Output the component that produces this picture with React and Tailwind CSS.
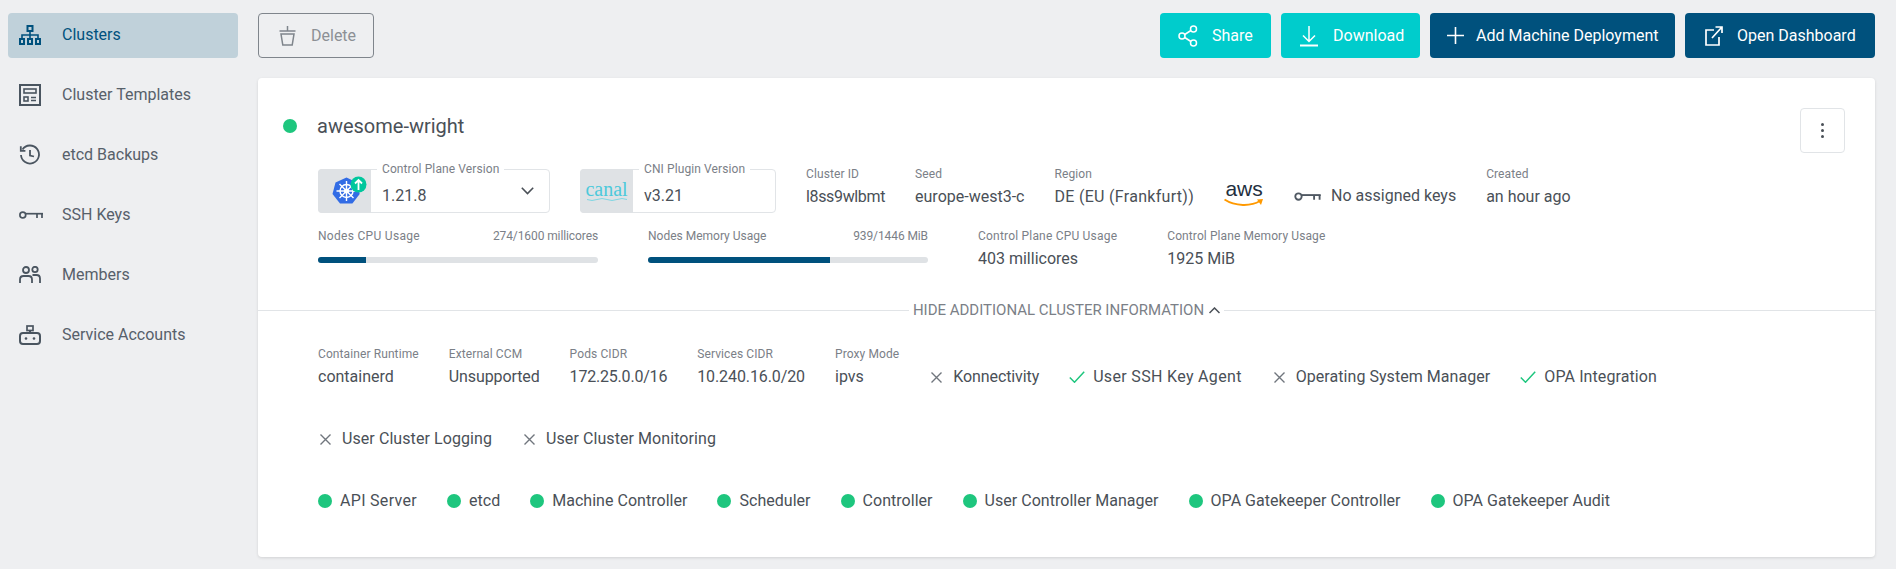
import React from "react";

const S = { fill: "none", stroke: "currentColor", strokeWidth: 1.7 };

const SitemapIcon = () => (
  <svg width="22" height="20" viewBox="0 0 22 20" {...S} strokeWidth="2">
    <rect x="8.5" y="1" width="5" height="5" />
    <rect x="1" y="14" width="4" height="5" />
    <rect x="9" y="14" width="4" height="5" />
    <rect x="17" y="14" width="4" height="5" />
    <path d="M11 6v8M3 14v-4h16v4" strokeWidth="1.6" />
  </svg>
);
const TemplateIcon = () => (
  <svg width="22" height="22" viewBox="0 0 22 22" {...S} strokeWidth="2">
    <rect x="1" y="1" width="20" height="20" />
    <rect x="5" y="5" width="12" height="4" strokeWidth="1.6" />
    <rect x="5" y="13" width="4" height="4" strokeWidth="1.6" />
    <path d="M12 13.5h5M12 16.5h5" strokeWidth="1.6" />
  </svg>
);
const HistoryIcon = () => (
  <svg width="22" height="22" viewBox="0 0 22 22" {...S} strokeWidth="1.8">
    <path d="M3.5 5.5A9 9 0 1 1 2 11" />
    <path d="M1.8 2.2v4.6h4.6" />
    <path d="M11 6v5.5l4 1" />
  </svg>
);
const KeyIcon = ({ w = 24, h = 10 }) => (
  <svg width={w} height={h} viewBox="0 0 24 10" {...S} strokeWidth="1.7">
    <circle cx="3.8" cy="5" r="2.9" />
    <path d="M6.7 3.7H24" />
    <path d="M18 3.7V8M23 3.7V8" />
  </svg>
);
const MembersIcon = () => (
  <svg width="22" height="18" viewBox="0 0 22 18" {...S} strokeWidth="1.8">
    <circle cx="7" cy="4" r="3" />
    <circle cx="16" cy="3.5" r="2.7" />
    <path d="M1 17v-3.5c0-2 1.500-3.500 3.500-3.500h5c2 0 3.500 1.500 3.500 3.500V17" />
    <path d="M13.500 9h4c2 0 3.500 1.500 3.500 3.500V17" />
  </svg>
);
const RobotIcon = () => (
  <svg width="22" height="20" viewBox="0 0 22 20" {...S} strokeWidth="2">
    <rect x="8" y="1" width="6" height="4.500" strokeWidth="1.700" />
    <path d="M11 5.500V8" />
    <rect x="1" y="8" width="20" height="11" rx="3" />
    <circle cx="7" cy="13.500" r="1.300" fill="currentColor" stroke="none" />
    <circle cx="15" cy="13.500" r="1.300" fill="currentColor" stroke="none" />
  </svg>
);
const TrashIcon = () => (
  <svg width="17" height="20" viewBox="0 0 17 20" {...S} strokeWidth="1.500">
    <path d="M0.500 5h16" />
    <path d="M8.500 0v5" />
    <path d="M2 8h13l-1.800 11H3.800z" />
  </svg>
);
const ShareIcon = () => (
  <svg width="20" height="22" viewBox="0 0 20 22" {...S} strokeWidth="1.500">
    <circle cx="15.500" cy="4" r="3" />
    <circle cx="4" cy="11" r="3" />
    <circle cx="15.500" cy="18" r="3" />
    <path d="M6.700 9.500l6.200-4M6.700 12.500l6.200 4" />
  </svg>
);
const DownloadIcon = () => (
  <svg width="18" height="22" viewBox="0 0 18 22" {...S} strokeWidth="1.500">
    <path d="M9 1v15M3 10.500l6 6 6-6" />
    <path d="M0 20.500h18" strokeWidth="2" />
  </svg>
);
const PlusIcon = () => (
  <svg width="17" height="17" viewBox="0 0 17 17" {...S} strokeWidth="1.600">
    <path d="M8.500 0v17M0 8.500h17" />
  </svg>
);
const ExternalIcon = () => (
  <svg width="18" height="20" viewBox="0 0 18 20" {...S} strokeWidth="1.700">
    <path d="M9 4H1v15h13v-8" />
    <path d="M7 12L16.500 1.500M10.500 1h6.500v6" />
  </svg>
);
const KubeIcon = () => (
  <svg width="36" height="30" viewBox="0 0 36 30" className="ml-[8px]">
    <path d="M15.500 1.500l10.500 5 2.700 11.500-7.300 9.500H9l-7.500-9.500L4.500 6.500z" fill="#326ce5" />
    <g fill="none" stroke="#fff" strokeWidth="1.400">
      <circle cx="15.500" cy="15" r="6.500" />
      <circle cx="15.500" cy="15" r="1.800" fill="#fff" />
      <path d="M15.500 5v20M5.500 15h20M8.500 8l14 14M22.500 8l-14 14" />
    </g>
    <circle cx="27.500" cy="8.500" r="8" fill="#00c79d" />
    <path d="M27.500 14V4M24 7.500l3.500-3.500 3.500 3.500" fill="none" stroke="#fff" strokeWidth="1.800" />
  </svg>
);
const CheckIcon = () => (
  <svg width="16" height="12" viewBox="0 0 16 12" fill="none" stroke="#1ec67e" strokeWidth="1.500">
    <path d="M0.800 6.500l4.700 4.700L15.200 0.800" />
  </svg>
);
const CrossIcon = () => (
  <svg width="11" height="11" viewBox="0 0 11 11" fill="none" stroke="#70767d" strokeWidth="1.400">
    <path d="M0.500 0.500l10 10M10.500 0.500l-10 10" />
  </svg>
);
const ChevronDown = () => (
  <svg width="13" height="8" viewBox="0 0 13 8" fill="none" stroke="#4a5057" strokeWidth="1.600">
    <path d="M0.800 0.800l5.700 5.700 5.700-5.700" />
  </svg>
);
const ChevronUp = () => (
  <svg width="11" height="7" viewBox="0 0 11 7" fill="none" stroke="#4a5057" strokeWidth="1.500">
    <path d="M0.500 6l5-5 5 5" />
  </svg>
);

const nav = [
  ["Clusters", <SitemapIcon />, true],
  ["Cluster Templates", <TemplateIcon />],
  ["etcd Backups", <HistoryIcon />],
  ["SSH Keys", <KeyIcon />],
  ["Members", <MembersIcon />],
  ["Service Accounts", <RobotIcon />],
];

function Info({ label, value, labelCls = "tracking-[0.1px]", valueCls = "" }) {
  return (
    <div className="flex flex-col whitespace-nowrap">
      <span className={`text-[12px] leading-[16px] text-[#7b8087] ${labelCls}`}>{label}</span>
      <span className={`mt-[5px] text-[16px] leading-[20px] text-[#4a5057] ${valueCls}`}>{value}</span>
    </div>
  );
}

function Usage({ label, right, pct, labelCls }) {
  return (
    <div className="w-[280px]">
      <div className="flex justify-between text-[12px] leading-[16px] text-[#7b8087]">
        <span className={labelCls}>{label}</span>
        <span className="tracking-[-0.1px]">{right}</span>
      </div>
      <div className="mt-[13px] h-[6px] overflow-hidden rounded-full bg-[#dfe2e5]">
        <div className="h-full bg-[#00517d]" style={{ width: `${pct}%` }} />
      </div>
    </div>
  );
}

function Field({ w, logo, label, value, chevron }) {
  return (
    <div className={`relative flex h-[44px] ${w} rounded-[4px] border border-[#e1e4e7]`}>
      <div className="-m-px flex h-[44px] w-[53px] shrink-0 items-center justify-center rounded-l-[4px] bg-[#dfe2e5]">
        {logo}
      </div>
      <div className="flex flex-1 items-end justify-between pb-[6px] pl-[12px] pr-[15px]">
        <span className="text-[16px] leading-[20px] text-[#4a5057]">{value}</span>
      </div>
      {chevron && (
        <span className="absolute right-[15px] top-[17px] flex">
          <ChevronDown />
        </span>
      )}
      <span className="absolute left-[58px] top-[-9px] whitespace-nowrap bg-white px-[5px] text-[12px] leading-[16px] tracking-[0.1px] text-[#7b8087]">
        {label}
      </span>
    </div>
  );
}

function Feature({ on, label, cls = "" }) {
  return (
    <div className={`flex items-center whitespace-nowrap text-[16px] leading-[20px] text-[#4a5057] ${cls}`}>
      {on ? (
        <span className="mr-[8px] flex"><CheckIcon /></span>
      ) : (
        <span className="ml-[2px] mr-[11px] flex"><CrossIcon /></span>
      )}
      {label}
    </div>
  );
}

function Health({ label, cls = "tracking-[0.03px]" }) {
  return (
    <div className={`flex items-center gap-[8px] whitespace-nowrap text-[16px] leading-[20px] text-[#4a5057] ${cls}`}>
      <span className="h-[14px] w-[14px] rounded-full bg-[#1ec67e]" />
      {label}
    </div>
  );
}

function Btn({ icon, label, dark, cls }) {
  return (
    <button className={`flex h-[45px] items-center rounded-[4px] text-[16px] text-white ${dark ? "bg-[#00517d]" : "bg-[#00cccc]"} ${cls}`}>
      {icon}
      <span>{label}</span>
    </button>
  );
}

export default function App() {
  return (
    <div className="flex min-h-[569px] bg-[#eeeff1] font-['Roboto',sans-serif]">
      <aside className="flex w-[258px] shrink-0 flex-col gap-[15px] pl-[8px] pr-[20px] pt-[13px]">
        {nav.map(([label, icon, active]) => (
          <div
            key={label}
            className={`flex h-[45px] items-center rounded-[4px] pb-[2px] text-[16px] ${active ? "bg-[#c0d1da] text-[#00517d]" : "text-[#57606a]"}`}
          >
            <span className={`flex w-[54px] justify-start pl-[11px] ${active ? "" : "text-[#4a5560]"}`}>{icon}</span>
            {label}
          </div>
        ))}
      </aside>
      <main className="w-[1617px] pt-[13px]">
        <div className="flex h-[45px] justify-between">
          <button className="flex w-[116px] items-center rounded-[4px] border border-[#7f858c] pl-[20px] text-[16px] text-[#8c9095]">
            <span className="mr-[15px] flex text-[#7f858c]"><TrashIcon /></span>
            Delete
          </button>
          <div className="flex gap-[10px]">
            <Btn icon={<span className="mr-[14px] flex"><ShareIcon /></span>} label="Share" cls="w-[111px] pl-[18px]" />
            <Btn icon={<span className="mr-[15px] flex"><DownloadIcon /></span>} label="Download" cls="w-[139px] pl-[19px]" />
            <Btn dark icon={<span className="mr-[12px] flex"><PlusIcon /></span>} label="Add Machine Deployment" cls="w-[245px] pl-[17px]" />
            <Btn dark icon={<span className="mr-[14px] flex"><ExternalIcon /></span>} label="Open Dashboard" cls="w-[190px] pl-[20px]" />
          </div>
        </div>

        <section className="mt-[20px] rounded-[4px] bg-white pb-[46px] pt-[30px] shadow-[0_1px_3px_rgba(0,0,0,0.12)]">
          <div className="flex h-[45px] items-start justify-between pl-[25px] pr-[30px]">
            <div className="flex h-[36px] items-center">
              <span className="h-[14px] w-[14px] rounded-full bg-[#1ec67e]" />
              <span className="ml-[20px] text-[20px] leading-[24px] text-[#4a5057]">awesome-wright</span>
            </div>
            <button className="flex h-[45px] w-[45px] flex-col items-center justify-center gap-[3px] rounded-[4px] border border-[#e1e4e7]">
              <span className="h-[3px] w-[3px] rounded-full bg-[#4a5057]" />
              <span className="h-[3px] w-[3px] rounded-full bg-[#4a5057]" />
              <span className="h-[3px] w-[3px] rounded-full bg-[#4a5057]" />
            </button>
          </div>

          <div className="mt-[16px] flex h-[44px] items-start gap-[30px] pl-[60px]">
            <Field w="w-[232px]" logo={<KubeIcon />} label="Control Plane Version" value="1.21.8" chevron />
            <Field w="w-[196px]" value="v3.21" label="CNI Plugin Version" logo={
              <div className="relative flex flex-col items-center">
                <span className="font-['Liberation_Serif',serif] text-[20px] leading-[18px] text-[#4cc9db]">canal</span>
                <svg width="40" height="4" viewBox="0 0 40 4" fill="none" stroke="#7fd6e3" strokeWidth="1">
                  <path d="M0 1.500q5 2 10 0t10 0 10 0 10 0" />
                </svg>
              </div>
            } />
            <div className="-mt-[3px]"><Info label="Cluster ID" value="l8ss9wlbmt" valueCls="tracking-[-0.35px]" /></div>
            <div className="-mt-[3px]"><Info label="Seed" value="europe-west3-c" /></div>
            <div className="-mt-[3px]"><Info label="Region" value="DE (EU (Frankfurt))" valueCls="tracking-[0.3px]" /></div>
            <div className="mt-[11px] flex w-[40px] flex-col items-center">
              <span className="font-['Liberation_Sans',sans-serif] text-[21px] leading-[18px] text-[#232f3e]">aws</span>
              <svg width="40" height="9" viewBox="0 0 40 9" fill="none">
                <path d="M0.500 1.500C11 8.500 27 8.500 36 3" stroke="#f90" strokeWidth="2" />
                <path d="M33 1.500l6-0.500-2 6z" fill="#f90" />
              </svg>
            </div>
            <div className="mt-[17px] flex h-[20px] items-center gap-[10px] whitespace-nowrap text-[16px] text-[#4a5057]">
              <span className="flex text-[#4f5862]"><KeyIcon w={27} h={11} /></span>
              No assigned keys
            </div>
            <div className="-mt-[3px]"><Info label="Created" value="an hour ago" /></div>
          </div>

          <div className="mt-[15px] flex h-[41px] items-start gap-[50px] pl-[60px]">
            <Usage label="Nodes CPU Usage" right="274/1600 millicores" pct={17.1} labelCls="tracking-[0.3px]" />
            <Usage label="Nodes Memory Usage" right="939/1446 MiB" pct={65} />
            <Info label="Control Plane CPU Usage" value="403 millicores" labelCls="tracking-[0.2px]" />
            <Info label="Control Plane Memory Usage" value="1925 MiB" />
          </div>

          <div className="mt-[31px] flex h-[20px] items-center">
            <span className="h-px flex-1 bg-[#e1e4e7]" />
            <span className="flex items-center gap-[5px] whitespace-nowrap px-[4px] text-[15px] text-[#7b8087]">
              HIDE ADDITIONAL CLUSTER INFORMATION <ChevronUp />
            </span>
            <span className="h-px flex-1 bg-[#e1e4e7]" />
          </div>

          <div className="mt-[26px] flex items-end gap-[30px] pl-[60px]">
            <Info label="Container Runtime" value="containerd" />
            <Info label="External CCM" value="Unsupported" valueCls="tracking-[-0.1px]" />
            <Info label="Pods CIDR" value="172.25.0.0/16" valueCls="tracking-[-0.2px]" />
            <Info label="Services CIDR" value="10.240.16.0/20" valueCls="tracking-[-0.1px]" />
            <Info label="Proxy Mode" value="ipvs" />
            <Feature label="Konnectivity" cls="tracking-[-0.1px]" />
            <Feature on label="User SSH Key Agent" cls="tracking-[0.33px]" />
            <Feature label="Operating System Manager" cls="tracking-[0.05px]" />
            <Feature on label="OPA Integration" cls="tracking-[0.1px]" />
          </div>
          <div className="mt-[42px] flex gap-[30px] pl-[60px]">
            <Feature label="User Cluster Logging" cls="tracking-[0.08px]" />
            <Feature label="User Cluster Monitoring" cls="tracking-[0.08px]" />
          </div>
          <div className="mt-[42px] flex gap-[30px] pl-[60px]">
            <Health label="API Server" cls="tracking-[0.3px]" />
            {["etcd", "Machine Controller", "Scheduler", "Controller", "User Controller Manager", "OPA Gatekeeper Controller", "OPA Gatekeeper Audit"].map((h) => (
              <Health key={h} label={h} />
            ))}
          </div>
        </section>
      </main>
    </div>
  );
}
